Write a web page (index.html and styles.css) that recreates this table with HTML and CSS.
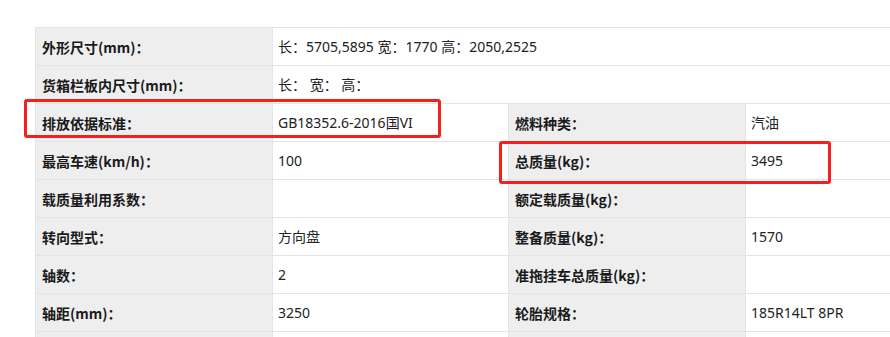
FILE: index.html
```html
<!DOCTYPE html>
<html lang="zh">
<head>
<meta charset="utf-8">
<link rel="stylesheet" href="styles.css">
</head>
<body>
<div class="page">
  <table class="spec">
    <colgroup>
      <col class="c-label"><col class="c-value"><col class="c-label"><col class="c-value">
    </colgroup>
    <tr><th>外形尺寸(mm)：</th><td colspan="3">长：5705,5895 宽：1770 高：2050,2525</td></tr>
    <tr><th>货箱栏板内尺寸(mm)：</th><td colspan="3">长：&nbsp;宽：&nbsp;高：</td></tr>
    <tr><th>排放依据标准：</th><td>GB18352.6-2016国VI</td><th>燃料种类：</th><td>汽油</td></tr>
    <tr><th>最高车速(km/h)：</th><td>100</td><th>总质量(kg)：</th><td>3495</td></tr>
    <tr><th>载质量利用系数：</th><td></td><th>额定载质量(kg)：</th><td></td></tr>
    <tr><th>转向型式：</th><td>方向盘</td><th>整备质量(kg)：</th><td>1570</td></tr>
    <tr><th>轴数：</th><td>2</td><th>准拖挂车总质量(kg)：</th><td></td></tr>
    <tr><th>轴距(mm)：</th><td>3250</td><th>轮胎规格：</th><td>185R14LT 8PR</td></tr>
    <tr><th></th><td></td><th></th><td></td></tr>
  </table>
  <div class="mark mark-1"></div>
  <div class="mark mark-2"></div>
</div>
</body>
</html>
```

FILE: styles.css
```css
html, body {
  margin: 0;
  padding: 0;
  background: #fff;
  overflow: hidden;
}
.page {
  position: relative;
  padding: 27px 0 0 35px;
  width: 1000px;
  font-family: "Noto Sans CJK SC", "Noto Sans", sans-serif;
  font-size: 14px;
  color: #222;
}
.spec {
  border-collapse: collapse;
  table-layout: fixed;
  width: 946px;
}
.c-label { width: 237px; }
.c-value { width: 236px; }
.spec tr { height: 38px; }
.spec th, .spec td {
  border: 1px solid #e4e4e4;
  padding: 0 5px;
  text-align: left;
  vertical-align: middle;
  white-space: nowrap;
  line-height: 20px;
}
.spec th {
  background: #eeeeee;
  font-weight: bold;
  color: #1a1a1a;
  padding-left: 6px;
}
.spec td {
  font-family: "Noto Sans", "Noto Sans CJK SC", sans-serif;
  font-weight: normal;
  color: #222;
}
.mark {
  position: absolute;
  border: 3px solid #f5201c;
  border-radius: 3px;
  box-sizing: border-box;
}
.mark-1 { left: 24px; top: 99px; width: 417px; height: 39px; }
.mark-2 { left: 499px; top: 141px; width: 332px; height: 43px; }
```
